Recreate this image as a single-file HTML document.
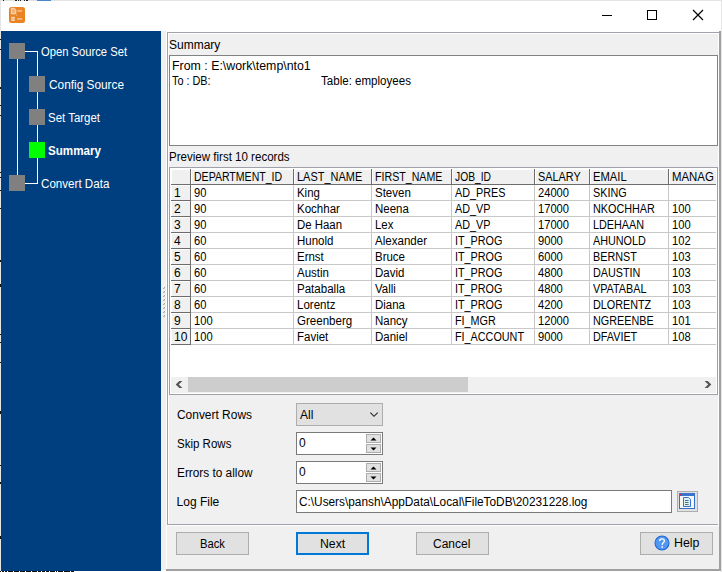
<!DOCTYPE html>
<html><head><meta charset="utf-8">
<style>
*{margin:0;padding:0;box-sizing:border-box}
html,body{width:722px;height:572px;overflow:hidden;background:#fff}
body{position:relative;font-family:"Liberation Sans",sans-serif;font-size:12px;color:#000}
.a{position:absolute}
.t{position:absolute;white-space:nowrap;line-height:16px;height:16px}
.sq{position:absolute;width:16px;height:16px;background:#808080}
.btn{position:absolute;background:#e1e1e1;border:1px solid #adadad}
</style></head><body>
<div class="a" style="left:0px;top:0px;width:722px;height:572px;background:#fff;"></div>
<div class="a" style="left:0px;top:0px;width:722px;height:1px;background:#e3e3e3;"></div>
<div class="a" style="left:0px;top:0px;width:1px;height:572px;background:#e6e6e6;"></div>
<div class="a" style="left:161px;top:31px;width:558px;height:539px;background:#f0f0f0;"></div>
<div class="a" style="left:166px;top:31px;width:553px;height:1px;background:#fff;"></div>
<div class="a" style="left:3px;top:0px;width:1px;height:1px;background:#222;"></div>
<div class="a" style="left:15px;top:0px;width:2px;height:1px;background:#222;"></div>
<div class="a" style="left:18px;top:0px;width:1px;height:1px;background:#222;"></div>
<div class="a" style="left:20px;top:0px;width:1px;height:1px;background:#222;"></div>
<div class="a" style="left:24px;top:0px;width:1px;height:1px;background:#222;"></div>
<div class="a" style="left:26px;top:0px;width:2px;height:1px;background:#222;"></div>
<div class="a" style="left:37px;top:0px;width:14px;height:1px;background:#4a86c8;"></div>
<div class="a" style="left:0px;top:571px;width:74px;height:1px;background:#111;"></div>
<div class="a" style="left:1px;top:571px;width:1px;height:1px;background:#fff;"></div>
<div class="a" style="left:4px;top:571px;width:1px;height:1px;background:#fff;"></div>
<div class="a" style="left:7px;top:571px;width:1px;height:1px;background:#fff;"></div>
<div class="a" style="left:13px;top:571px;width:1px;height:1px;background:#fff;"></div>
<div class="a" style="left:19px;top:571px;width:1px;height:1px;background:#fff;"></div>
<div class="a" style="left:25px;top:571px;width:1px;height:1px;background:#fff;"></div>
<div class="a" style="left:31px;top:571px;width:1px;height:1px;background:#fff;"></div>
<div class="a" style="left:37px;top:571px;width:1px;height:1px;background:#fff;"></div>
<div class="a" style="left:41px;top:571px;width:1px;height:1px;background:#fff;"></div>
<div class="a" style="left:45px;top:571px;width:1px;height:1px;background:#fff;"></div>
<div class="a" style="left:49px;top:571px;width:1px;height:1px;background:#fff;"></div>
<div class="a" style="left:55px;top:571px;width:1px;height:1px;background:#fff;"></div>
<div class="a" style="left:57px;top:571px;width:1px;height:1px;background:#fff;"></div>
<div class="a" style="left:63px;top:571px;width:1px;height:1px;background:#fff;"></div>
<div class="a" style="left:70px;top:571px;width:1px;height:1px;background:#fff;"></div>
<div class="a" style="left:721px;top:1px;width:1px;height:571px;background:#e6e6e6;"></div>
<div class="a" style="left:0px;top:39px;width:1px;height:1px;background:#111;"></div>
<div class="a" style="left:0px;top:49px;width:1px;height:1px;background:#111;"></div>
<div class="a" style="left:0px;top:87px;width:1px;height:2px;background:#111;"></div>
<div class="a" style="left:0px;top:105px;width:1px;height:1px;background:#111;"></div>
<div class="a" style="left:0px;top:115px;width:1px;height:1px;background:#111;"></div>
<div class="a" style="left:0px;top:172px;width:1px;height:1px;background:#111;"></div>
<div class="a" style="left:0px;top:177px;width:1px;height:1px;background:#111;"></div>
<div class="a" style="left:0px;top:190px;width:1px;height:1px;background:#111;"></div>
<div class="a" style="left:0px;top:208px;width:1px;height:1px;background:#111;"></div>
<div class="a" style="left:0px;top:260px;width:1px;height:2px;background:#111;"></div>
<div class="a" style="left:0px;top:284px;width:1px;height:3px;background:#111;"></div>
<div class="a" style="left:0px;top:334px;width:1px;height:1px;background:#111;"></div>
<div class="a" style="left:0px;top:342px;width:1px;height:1px;background:#111;"></div>
<div class="a" style="left:0px;top:362px;width:1px;height:1px;background:#111;"></div>
<div class="a" style="left:0px;top:411px;width:1px;height:3px;background:#111;"></div>
<div class="a" style="left:0px;top:465px;width:1px;height:1px;background:#111;"></div>
<div class="a" style="left:0px;top:482px;width:1px;height:2px;background:#111;"></div>
<div class="a" style="left:0px;top:536px;width:1px;height:3px;background:#111;"></div>
<svg class="a" style="left:9px;top:7px" width="16" height="16" viewBox="0 0 16 16">
<rect x="0" y="0" width="16" height="16" rx="2.5" fill="#ea8322"/>
<path d="M2.3 1.3h3l1.5 1.5v4h-4.5z" fill="#f3b47c" stroke="#fbe3cc" stroke-width="0.9"/>
<path d="M8.2 3.9h5" stroke="#f2b37f" stroke-width="2"/>
<path d="M7.6 7.6v1.2" stroke="#f5c597" stroke-width="0.9"/>
<rect x="2.2" y="9.8" width="3.6" height="4.2" fill="#f7d5b2"/>
<path d="M2.2 11.2h3.6M2.2 12.6h3.6" stroke="#eea465" stroke-width="0.5"/>
<path d="M8.2 12h5" stroke="#f2b37f" stroke-width="2"/>
</svg>
<div class="a" style="left:602px;top:15px;width:10px;height:1px;background:#000;"></div>
<div class="a" style="left:647px;top:10px;width:10px;height:10px;border:1px solid #000"></div>
<svg class="a" style="left:692px;top:9px" width="12" height="12" viewBox="0 0 12 12"><path d="M1 1L11 11M11 1L1 11" stroke="#000" stroke-width="1.2"/></svg>
<div class="a" style="left:1px;top:31px;width:160px;height:540px;background:#003f7f;"></div>
<div class="a" style="left:17px;top:59px;width:1px;height:116px;background:#fff;"></div>
<div class="a" style="left:37px;top:51px;width:1px;height:133px;background:#fff;"></div>
<div class="a" style="left:25px;top:51px;width:12px;height:1px;background:#fff;"></div>
<div class="a" style="left:25px;top:183px;width:12px;height:1px;background:#fff;"></div>
<div class="a" style="left:9px;top:43px;width:16px;height:16px;background:#808080;"></div>
<div class="a" style="left:29px;top:76px;width:16px;height:16px;background:#808080;"></div>
<div class="a" style="left:29px;top:109px;width:16px;height:16px;background:#808080;"></div>
<div class="a" style="left:29px;top:142px;width:16px;height:16px;background:#00ff00;"></div>
<div class="a" style="left:9px;top:175px;width:16px;height:16px;background:#808080;"></div>
<div class="t" style="left:41px;top:44px;transform:scaleX(0.935);transform-origin:0 0;color:#fff">Open Source Set</div>
<div class="t" style="left:49px;top:77px;transform:scaleX(0.987);transform-origin:0 0;color:#fff">Config Source</div>
<div class="t" style="left:48px;top:110px;transform:scaleX(0.955);transform-origin:0 0;color:#fff">Set Target</div>
<div class="t" style="left:48px;top:143px;transform:scaleX(0.97);transform-origin:0 0;color:#fff;font-weight:bold">Summary</div>
<div class="t" style="left:41px;top:176px;transform:scaleX(0.967);transform-origin:0 0;color:#fff">Convert Data</div>
<div class="a" style="left:164px;top:287px;width:1px;height:1px;background:#a8a8a8;"></div>
<div class="a" style="left:163px;top:288px;width:1px;height:1px;background:#b0b0b0;"></div>
<div class="a" style="left:164px;top:288px;width:1px;height:1px;background:#c8c8c8;"></div>
<div class="a" style="left:164px;top:291px;width:1px;height:1px;background:#a8a8a8;"></div>
<div class="a" style="left:163px;top:292px;width:1px;height:1px;background:#b0b0b0;"></div>
<div class="a" style="left:164px;top:292px;width:1px;height:1px;background:#c8c8c8;"></div>
<div class="a" style="left:164px;top:295px;width:1px;height:1px;background:#a8a8a8;"></div>
<div class="a" style="left:163px;top:296px;width:1px;height:1px;background:#b0b0b0;"></div>
<div class="a" style="left:164px;top:296px;width:1px;height:1px;background:#c8c8c8;"></div>
<div class="a" style="left:164px;top:299px;width:1px;height:1px;background:#a8a8a8;"></div>
<div class="a" style="left:163px;top:300px;width:1px;height:1px;background:#b0b0b0;"></div>
<div class="a" style="left:164px;top:300px;width:1px;height:1px;background:#c8c8c8;"></div>
<div class="a" style="left:164px;top:303px;width:1px;height:1px;background:#a8a8a8;"></div>
<div class="a" style="left:163px;top:304px;width:1px;height:1px;background:#b0b0b0;"></div>
<div class="a" style="left:164px;top:304px;width:1px;height:1px;background:#c8c8c8;"></div>
<div class="a" style="left:164px;top:307px;width:1px;height:1px;background:#a8a8a8;"></div>
<div class="a" style="left:163px;top:308px;width:1px;height:1px;background:#b0b0b0;"></div>
<div class="a" style="left:164px;top:308px;width:1px;height:1px;background:#c8c8c8;"></div>
<div class="a" style="left:164px;top:311px;width:1px;height:1px;background:#a8a8a8;"></div>
<div class="a" style="left:163px;top:312px;width:1px;height:1px;background:#b0b0b0;"></div>
<div class="a" style="left:164px;top:312px;width:1px;height:1px;background:#c8c8c8;"></div>
<div class="a" style="left:164px;top:315px;width:1px;height:1px;background:#a8a8a8;"></div>
<div class="a" style="left:163px;top:316px;width:1px;height:1px;background:#b0b0b0;"></div>
<div class="a" style="left:164px;top:316px;width:1px;height:1px;background:#c8c8c8;"></div>
<div class="a" style="left:166px;top:31px;width:1px;height:539px;background:#fff;"></div>
<div class="a" style="left:167px;top:32px;width:552px;height:1px;background:#a0a0a8;"></div>
<div class="a" style="left:167px;top:32px;width:1px;height:493px;background:#a0a0a8;"></div>
<div class="a" style="left:168px;top:33px;width:550px;height:1px;background:#fff;"></div>
<div class="a" style="left:168px;top:33px;width:1px;height:491px;background:#fff;"></div>
<div class="a" style="left:167px;top:524px;width:552px;height:1px;background:#a0a0a8;"></div>
<div class="a" style="left:166px;top:525px;width:553px;height:1px;background:#fff;"></div>
<div class="a" style="left:718px;top:33px;width:1px;height:492px;background:#fff;"></div>
<div class="a" style="left:719px;top:31px;width:2px;height:540px;background:#a0a0a0;"></div>
<div class="a" style="left:166px;top:569px;width:555px;height:2px;background:#a0a0a0;"></div>
<div class="t" style="left:169px;top:37px;">Summary</div>
<div class="a" style="left:169px;top:55px;width:549px;height:91px;background:#fff;border:1px solid #828282"></div>
<div class="t" style="left:172px;top:58px;transform:scaleX(1.03);transform-origin:0 0;">From : E:\work\temp\nto1</div>
<div class="t" style="left:172px;top:73px;transform:scaleX(0.905);transform-origin:0 0;">To : DB:</div>
<div class="t" style="left:321px;top:73px;transform:scaleX(0.963);transform-origin:0 0;">Table: employees</div>
<div class="t" style="left:169px;top:149px;transform:scaleX(0.962);transform-origin:0 0;">Preview first 10 records</div>
<div class="a" style="left:169px;top:167px;width:549px;height:228px;background:#fff;border:1px solid #a0a0a8"></div>
<div class="a" style="left:171px;top:169px;width:545px;height:15px;background:#f0f0f0;"></div>
<div class="a" style="left:171px;top:185px;width:19px;height:159px;background:#f0f0f0;"></div>
<div class="a" style="left:171px;top:169px;width:545px;height:1px;background:#fff;"></div>
<div class="a" style="left:171px;top:169px;width:1px;height:176px;background:#fff;"></div>
<div class="a" style="left:191px;top:169px;width:1px;height:15px;background:#fff;"></div>
<div class="a" style="left:294px;top:169px;width:1px;height:15px;background:#fff;"></div>
<div class="a" style="left:372px;top:169px;width:1px;height:15px;background:#fff;"></div>
<div class="a" style="left:452px;top:169px;width:1px;height:15px;background:#fff;"></div>
<div class="a" style="left:535px;top:169px;width:1px;height:15px;background:#fff;"></div>
<div class="a" style="left:590px;top:169px;width:1px;height:15px;background:#fff;"></div>
<div class="a" style="left:669px;top:169px;width:1px;height:15px;background:#fff;"></div>
<div class="a" style="left:171px;top:185px;width:19px;height:1px;background:#fff;"></div>
<div class="a" style="left:171px;top:201px;width:19px;height:1px;background:#fff;"></div>
<div class="a" style="left:171px;top:217px;width:19px;height:1px;background:#fff;"></div>
<div class="a" style="left:171px;top:233px;width:19px;height:1px;background:#fff;"></div>
<div class="a" style="left:171px;top:249px;width:19px;height:1px;background:#fff;"></div>
<div class="a" style="left:171px;top:265px;width:19px;height:1px;background:#fff;"></div>
<div class="a" style="left:171px;top:281px;width:19px;height:1px;background:#fff;"></div>
<div class="a" style="left:171px;top:297px;width:19px;height:1px;background:#fff;"></div>
<div class="a" style="left:171px;top:313px;width:19px;height:1px;background:#fff;"></div>
<div class="a" style="left:171px;top:329px;width:19px;height:1px;background:#fff;"></div>
<div class="a" style="left:171px;top:184px;width:545px;height:1px;background:#6d6d6d;"></div>
<div class="a" style="left:191px;top:200px;width:525px;height:1px;background:#c8c8c8;"></div>
<div class="a" style="left:171px;top:200px;width:20px;height:1px;background:#6d6d6d;"></div>
<div class="a" style="left:191px;top:216px;width:525px;height:1px;background:#c8c8c8;"></div>
<div class="a" style="left:171px;top:216px;width:20px;height:1px;background:#6d6d6d;"></div>
<div class="a" style="left:191px;top:232px;width:525px;height:1px;background:#c8c8c8;"></div>
<div class="a" style="left:171px;top:232px;width:20px;height:1px;background:#6d6d6d;"></div>
<div class="a" style="left:191px;top:248px;width:525px;height:1px;background:#c8c8c8;"></div>
<div class="a" style="left:171px;top:248px;width:20px;height:1px;background:#6d6d6d;"></div>
<div class="a" style="left:191px;top:264px;width:525px;height:1px;background:#c8c8c8;"></div>
<div class="a" style="left:171px;top:264px;width:20px;height:1px;background:#6d6d6d;"></div>
<div class="a" style="left:191px;top:280px;width:525px;height:1px;background:#c8c8c8;"></div>
<div class="a" style="left:171px;top:280px;width:20px;height:1px;background:#6d6d6d;"></div>
<div class="a" style="left:191px;top:296px;width:525px;height:1px;background:#c8c8c8;"></div>
<div class="a" style="left:171px;top:296px;width:20px;height:1px;background:#6d6d6d;"></div>
<div class="a" style="left:191px;top:312px;width:525px;height:1px;background:#c8c8c8;"></div>
<div class="a" style="left:171px;top:312px;width:20px;height:1px;background:#6d6d6d;"></div>
<div class="a" style="left:191px;top:328px;width:525px;height:1px;background:#c8c8c8;"></div>
<div class="a" style="left:171px;top:328px;width:20px;height:1px;background:#6d6d6d;"></div>
<div class="a" style="left:191px;top:344px;width:525px;height:1px;background:#c8c8c8;"></div>
<div class="a" style="left:171px;top:344px;width:20px;height:1px;background:#6d6d6d;"></div>
<div class="a" style="left:190px;top:169px;width:1px;height:176px;background:#6d6d6d;"></div>
<div class="a" style="left:293px;top:169px;width:1px;height:16px;background:#6d6d6d;"></div>
<div class="a" style="left:293px;top:185px;width:1px;height:160px;background:#c8c8c8;"></div>
<div class="a" style="left:371px;top:169px;width:1px;height:16px;background:#6d6d6d;"></div>
<div class="a" style="left:371px;top:185px;width:1px;height:160px;background:#c8c8c8;"></div>
<div class="a" style="left:451px;top:169px;width:1px;height:16px;background:#6d6d6d;"></div>
<div class="a" style="left:451px;top:185px;width:1px;height:160px;background:#c8c8c8;"></div>
<div class="a" style="left:534px;top:169px;width:1px;height:16px;background:#6d6d6d;"></div>
<div class="a" style="left:534px;top:185px;width:1px;height:160px;background:#c8c8c8;"></div>
<div class="a" style="left:589px;top:169px;width:1px;height:16px;background:#6d6d6d;"></div>
<div class="a" style="left:589px;top:185px;width:1px;height:160px;background:#c8c8c8;"></div>
<div class="a" style="left:668px;top:169px;width:1px;height:16px;background:#6d6d6d;"></div>
<div class="a" style="left:668px;top:185px;width:1px;height:160px;background:#c8c8c8;"></div>
<div class="t" style="left:194px;top:169px;transform:scaleX(0.879);transform-origin:0 0;">DEPARTMENT_ID</div>
<div class="t" style="left:297px;top:169px;transform:scaleX(0.914);transform-origin:0 0;">LAST_NAME</div>
<div class="t" style="left:375px;top:169px;transform:scaleX(0.887);transform-origin:0 0;">FIRST_NAME</div>
<div class="t" style="left:455px;top:169px;transform:scaleX(0.857);transform-origin:0 0;">JOB_ID</div>
<div class="t" style="left:538px;top:169px;transform:scaleX(0.904);transform-origin:0 0;">SALARY</div>
<div class="t" style="left:593px;top:169px;transform:scaleX(0.934);transform-origin:0 0;">EMAIL</div>
<div class="t" style="left:672px;top:169px;transform:scaleX(0.95);transform-origin:0 0;">MANAG</div>
<div class="t" style="left:174px;top:185px;">1</div>
<div class="t" style="left:193.5px;top:185px;transform:scaleX(0.93);transform-origin:0 0;">90</div>
<div class="t" style="left:296.5px;top:185px;transform:scaleX(0.9525);transform-origin:0 0;">King</div>
<div class="t" style="left:374.5px;top:185px;transform:scaleX(0.9583333333333333);transform-origin:0 0;">Steven</div>
<div class="t" style="left:454.5px;top:185px;transform:scaleX(0.8999999999999999);transform-origin:0 0;">AD_PRES</div>
<div class="t" style="left:537.5px;top:185px;transform:scaleX(0.93);transform-origin:0 0;">24000</div>
<div class="t" style="left:592.5px;top:185px;transform:scaleX(0.8999999999999999);transform-origin:0 0;">SKING</div>
<div class="t" style="left:671.5px;top:185px;"></div>
<div class="t" style="left:174px;top:201px;">2</div>
<div class="t" style="left:193.5px;top:201px;transform:scaleX(0.93);transform-origin:0 0;">90</div>
<div class="t" style="left:296.5px;top:201px;transform:scaleX(0.96);transform-origin:0 0;">Kochhar</div>
<div class="t" style="left:374.5px;top:201px;transform:scaleX(0.956);transform-origin:0 0;">Neena</div>
<div class="t" style="left:454.5px;top:201px;transform:scaleX(0.8999999999999999);transform-origin:0 0;">AD_VP</div>
<div class="t" style="left:537.5px;top:201px;transform:scaleX(0.93);transform-origin:0 0;">17000</div>
<div class="t" style="left:592.5px;top:201px;transform:scaleX(0.8999999999999999);transform-origin:0 0;">NKOCHHAR</div>
<div class="t" style="left:671.5px;top:201px;transform:scaleX(0.93);transform-origin:0 0;">100</div>
<div class="t" style="left:174px;top:217px;">3</div>
<div class="t" style="left:193.5px;top:217px;transform:scaleX(0.93);transform-origin:0 0;">90</div>
<div class="t" style="left:296.5px;top:217px;transform:scaleX(0.95);transform-origin:0 0;">De Haan</div>
<div class="t" style="left:374.5px;top:217px;transform:scaleX(0.9466666666666667);transform-origin:0 0;">Lex</div>
<div class="t" style="left:454.5px;top:217px;transform:scaleX(0.8999999999999999);transform-origin:0 0;">AD_VP</div>
<div class="t" style="left:537.5px;top:217px;transform:scaleX(0.93);transform-origin:0 0;">17000</div>
<div class="t" style="left:592.5px;top:217px;transform:scaleX(0.8999999999999999);transform-origin:0 0;">LDEHAAN</div>
<div class="t" style="left:671.5px;top:217px;transform:scaleX(0.93);transform-origin:0 0;">100</div>
<div class="t" style="left:174px;top:233px;">4</div>
<div class="t" style="left:193.5px;top:233px;transform:scaleX(0.93);transform-origin:0 0;">60</div>
<div class="t" style="left:296.5px;top:233px;transform:scaleX(0.9583333333333333);transform-origin:0 0;">Hunold</div>
<div class="t" style="left:374.5px;top:233px;transform:scaleX(0.9622222222222222);transform-origin:0 0;">Alexander</div>
<div class="t" style="left:454.5px;top:233px;transform:scaleX(0.8999999999999999);transform-origin:0 0;">IT_PROG</div>
<div class="t" style="left:537.5px;top:233px;transform:scaleX(0.93);transform-origin:0 0;">9000</div>
<div class="t" style="left:592.5px;top:233px;transform:scaleX(0.8999999999999999);transform-origin:0 0;">AHUNOLD</div>
<div class="t" style="left:671.5px;top:233px;transform:scaleX(0.93);transform-origin:0 0;">102</div>
<div class="t" style="left:174px;top:249px;">5</div>
<div class="t" style="left:193.5px;top:249px;transform:scaleX(0.93);transform-origin:0 0;">60</div>
<div class="t" style="left:296.5px;top:249px;transform:scaleX(0.956);transform-origin:0 0;">Ernst</div>
<div class="t" style="left:374.5px;top:249px;transform:scaleX(0.956);transform-origin:0 0;">Bruce</div>
<div class="t" style="left:454.5px;top:249px;transform:scaleX(0.8999999999999999);transform-origin:0 0;">IT_PROG</div>
<div class="t" style="left:537.5px;top:249px;transform:scaleX(0.93);transform-origin:0 0;">6000</div>
<div class="t" style="left:592.5px;top:249px;transform:scaleX(0.8999999999999999);transform-origin:0 0;">BERNST</div>
<div class="t" style="left:671.5px;top:249px;transform:scaleX(0.93);transform-origin:0 0;">103</div>
<div class="t" style="left:174px;top:265px;">6</div>
<div class="t" style="left:193.5px;top:265px;transform:scaleX(0.93);transform-origin:0 0;">60</div>
<div class="t" style="left:296.5px;top:265px;transform:scaleX(0.9583333333333333);transform-origin:0 0;">Austin</div>
<div class="t" style="left:374.5px;top:265px;transform:scaleX(0.956);transform-origin:0 0;">David</div>
<div class="t" style="left:454.5px;top:265px;transform:scaleX(0.8999999999999999);transform-origin:0 0;">IT_PROG</div>
<div class="t" style="left:537.5px;top:265px;transform:scaleX(0.93);transform-origin:0 0;">4800</div>
<div class="t" style="left:592.5px;top:265px;transform:scaleX(0.8999999999999999);transform-origin:0 0;">DAUSTIN</div>
<div class="t" style="left:671.5px;top:265px;transform:scaleX(0.93);transform-origin:0 0;">103</div>
<div class="t" style="left:174px;top:281px;">7</div>
<div class="t" style="left:193.5px;top:281px;transform:scaleX(0.93);transform-origin:0 0;">60</div>
<div class="t" style="left:296.5px;top:281px;transform:scaleX(0.9622222222222222);transform-origin:0 0;">Pataballa</div>
<div class="t" style="left:374.5px;top:281px;transform:scaleX(0.956);transform-origin:0 0;">Valli</div>
<div class="t" style="left:454.5px;top:281px;transform:scaleX(0.8999999999999999);transform-origin:0 0;">IT_PROG</div>
<div class="t" style="left:537.5px;top:281px;transform:scaleX(0.93);transform-origin:0 0;">4800</div>
<div class="t" style="left:592.5px;top:281px;transform:scaleX(0.8999999999999999);transform-origin:0 0;">VPATABAL</div>
<div class="t" style="left:671.5px;top:281px;transform:scaleX(0.93);transform-origin:0 0;">103</div>
<div class="t" style="left:174px;top:297px;">8</div>
<div class="t" style="left:193.5px;top:297px;transform:scaleX(0.93);transform-origin:0 0;">60</div>
<div class="t" style="left:296.5px;top:297px;transform:scaleX(0.96);transform-origin:0 0;">Lorentz</div>
<div class="t" style="left:374.5px;top:297px;transform:scaleX(0.956);transform-origin:0 0;">Diana</div>
<div class="t" style="left:454.5px;top:297px;transform:scaleX(0.8999999999999999);transform-origin:0 0;">IT_PROG</div>
<div class="t" style="left:537.5px;top:297px;transform:scaleX(0.93);transform-origin:0 0;">4200</div>
<div class="t" style="left:592.5px;top:297px;transform:scaleX(0.8999999999999999);transform-origin:0 0;">DLORENTZ</div>
<div class="t" style="left:671.5px;top:297px;transform:scaleX(0.93);transform-origin:0 0;">103</div>
<div class="t" style="left:174px;top:313px;">9</div>
<div class="t" style="left:193.5px;top:313px;transform:scaleX(0.93);transform-origin:0 0;">100</div>
<div class="t" style="left:296.5px;top:313px;transform:scaleX(0.9622222222222222);transform-origin:0 0;">Greenberg</div>
<div class="t" style="left:374.5px;top:313px;transform:scaleX(0.956);transform-origin:0 0;">Nancy</div>
<div class="t" style="left:454.5px;top:313px;transform:scaleX(0.8999999999999999);transform-origin:0 0;">FI_MGR</div>
<div class="t" style="left:537.5px;top:313px;transform:scaleX(0.93);transform-origin:0 0;">12000</div>
<div class="t" style="left:592.5px;top:313px;transform:scaleX(0.8999999999999999);transform-origin:0 0;">NGREENBE</div>
<div class="t" style="left:671.5px;top:313px;transform:scaleX(0.93);transform-origin:0 0;">101</div>
<div class="t" style="left:174px;top:329px;">10</div>
<div class="t" style="left:193.5px;top:329px;transform:scaleX(0.93);transform-origin:0 0;">100</div>
<div class="t" style="left:296.5px;top:329px;transform:scaleX(0.9583333333333333);transform-origin:0 0;">Faviet</div>
<div class="t" style="left:374.5px;top:329px;transform:scaleX(0.9583333333333333);transform-origin:0 0;">Daniel</div>
<div class="t" style="left:454.5px;top:329px;transform:scaleX(0.8999999999999999);transform-origin:0 0;">FI_ACCOUNT</div>
<div class="t" style="left:537.5px;top:329px;transform:scaleX(0.93);transform-origin:0 0;">9000</div>
<div class="t" style="left:592.5px;top:329px;transform:scaleX(0.8999999999999999);transform-origin:0 0;">DFAVIET</div>
<div class="t" style="left:671.5px;top:329px;transform:scaleX(0.93);transform-origin:0 0;">108</div>
<div class="a" style="left:171px;top:377px;width:545px;height:16px;background:#f0f0f0;"></div>
<div class="a" style="left:188px;top:377px;width:280px;height:15px;background:#cdcdcd;"></div>
<svg class="a" style="left:171px;top:377px" width="17" height="15" viewBox="0 0 17 15"><path d="M4.7 7.5L8.3 3.9H11.4L7.8 7.5L11.4 11.1H8.3Z" fill="#555"/></svg>
<svg class="a" style="left:699px;top:377px" width="17" height="15" viewBox="0 0 17 15"><path d="M12.3 7.5L8.7 3.9H5.6L9.2 7.5L5.6 11.1H8.7Z" fill="#555"/></svg>
<div class="t" style="left:176.6px;top:407px;transform:scaleX(0.995);transform-origin:0 0;">Convert Rows</div>
<div class="t" style="left:176.6px;top:436px;transform:scaleX(0.96);transform-origin:0 0;">Skip Rows</div>
<div class="t" style="left:176.6px;top:465px;transform:scaleX(0.985);transform-origin:0 0;">Errors to allow</div>
<div class="t" style="left:176.6px;top:494px;">Log File</div>
<div class="a" style="left:296px;top:403px;width:87px;height:23px;background:#e1e1e1;border:1px solid #adadad"></div>
<div class="t" style="left:300px;top:407px;">All</div>
<svg class="a" style="left:369px;top:411px" width="10" height="7" viewBox="0 0 10 7"><path d="M1.4 1.6L5 5.3L8.7 1.6" fill="none" stroke="#262626" stroke-width="1.15"/></svg>
<div class="a" style="left:296px;top:432px;width:87px;height:23px;background:#fff;border:1px solid #7a7a7a"></div>
<div class="t" style="left:299px;top:435px;">0</div>
<div class="a" style="left:366px;top:434px;width:15px;height:9px;background:#e1e1e1;border:1px solid #adadad"></div>
<div class="a" style="left:366px;top:444px;width:15px;height:9px;background:#e1e1e1;border:1px solid #adadad"></div>
<svg class="a" style="left:366px;top:434px" width="15" height="20" viewBox="0 0 15 20"><path d="M4.5 6.5h6l-3-3z" fill="#000"/><path d="M4.5 13.5h6l-3 3z" fill="#000"/></svg>
<div class="a" style="left:296px;top:461px;width:87px;height:23px;background:#fff;border:1px solid #7a7a7a"></div>
<div class="t" style="left:299px;top:464px;">0</div>
<div class="a" style="left:366px;top:463px;width:15px;height:9px;background:#e1e1e1;border:1px solid #adadad"></div>
<div class="a" style="left:366px;top:473px;width:15px;height:9px;background:#e1e1e1;border:1px solid #adadad"></div>
<svg class="a" style="left:366px;top:463px" width="15" height="20" viewBox="0 0 15 20"><path d="M4.5 6.5h6l-3-3z" fill="#000"/><path d="M4.5 13.5h6l-3 3z" fill="#000"/></svg>
<div class="a" style="left:296px;top:490px;width:376px;height:23px;background:#fff;border:1px solid #7a7a7a"></div>
<div class="t" style="left:299px;top:494px;transform:scaleX(0.985);transform-origin:0 0;">C:\Users\pansh\AppData\Local\FileToDB\20231228.log</div>
<div class="a" style="left:677px;top:491px;width:21px;height:21px;background:#e1e1e1;border:1px solid #adadad"></div>
<svg class="a" style="left:679px;top:493px" width="16" height="16" viewBox="0 0 16 16">
<rect x="0.5" y="0.5" width="15" height="15" fill="#f7f7f2" stroke="#3470cc"/>
<rect x="0" y="0" width="16" height="3" fill="#3a74cf"/>
<rect x="1" y="1" width="1.3" height="1.3" fill="#e81818"/>
<path d="M4.5 4.5H9.6L11.5 6.4V13.5H4.5Z" fill="#dcf2fa" stroke="#3872cc"/>
<path d="M6 7.5h3.6M6 9.5h3.6M6 11.5h3.6" stroke="#587070" stroke-width="1"/>
</svg>
<div class="btn" style="left:176px;top:532px;width:73px;height:23px;"></div>
<div class="t" style="left:200px;top:536px;transform:scaleX(0.935);transform-origin:0 0;">Back</div>
<div class="a" style="left:296px;top:532px;width:73px;height:23px;background:#e1e1e1;border:2px solid #0078d7"></div>
<div class="t" style="left:320px;top:536px;transform:scaleX(1.02);transform-origin:0 0;">Next</div>
<div class="btn" style="left:416px;top:532px;width:73px;height:23px;"></div>
<div class="t" style="left:433px;top:536px;">Cancel</div>
<div class="btn" style="left:640px;top:532px;width:73px;height:23px;"></div>
<div class="t" style="left:674px;top:535px;transform:scaleX(1.03);transform-origin:0 0;">Help</div>
<svg class="a" style="left:654px;top:535px" width="16" height="16" viewBox="0 0 16 16">
<circle cx="8" cy="8" r="7" fill="#5198f2" stroke="#1f65d3" stroke-width="1.1"/>
<path d="M5.6 6.1C5.6 4.6 6.6 3.9 8 3.9C9.4 3.9 10.4 4.7 10.4 5.9C10.4 7.4 8.3 7.6 8.3 9.4V10" fill="none" stroke="#fff" stroke-width="1.3"/>
<rect x="7.5" y="11.2" width="1.5" height="1.5" fill="#fff"/>
</svg>
</body></html>
